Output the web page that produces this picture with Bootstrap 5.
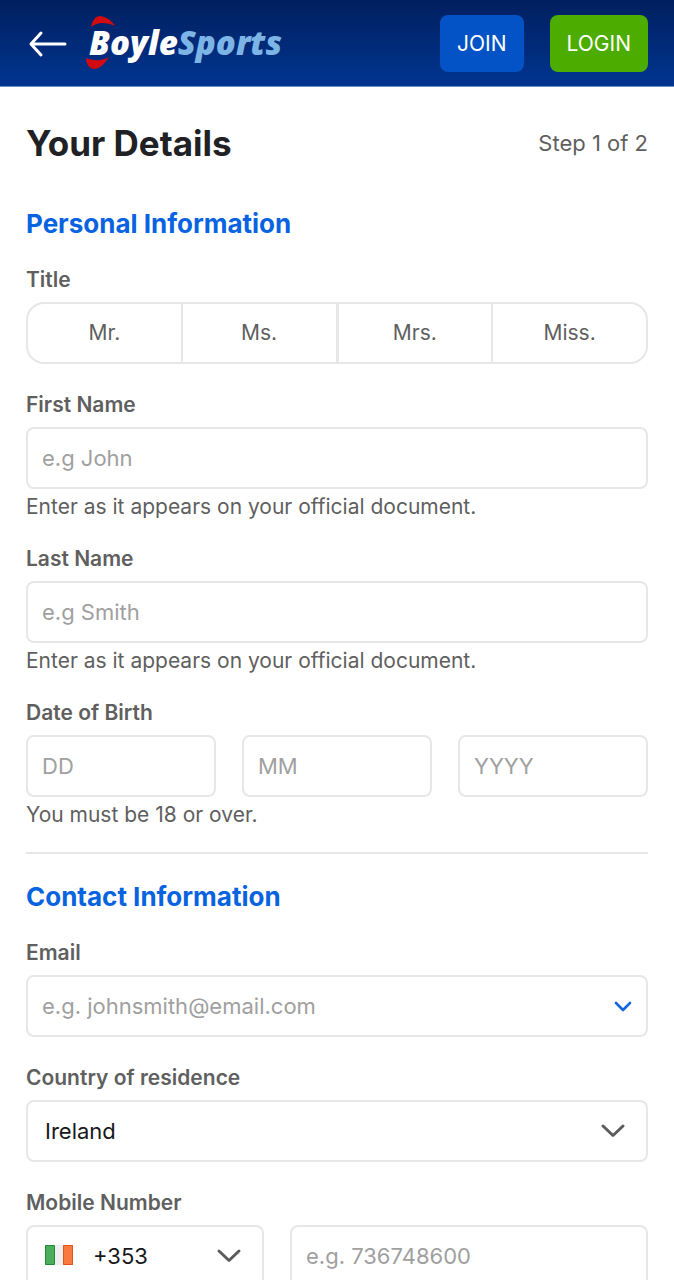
<!DOCTYPE html>
<html lang="en">
<head>
<meta charset="utf-8">
<meta name="viewport" content="width=device-width, initial-scale=1">
<title>BoyleSports – Your Details</title>
<link href="https://cdn.jsdelivr.net/npm/bootstrap@5.3.0/dist/css/bootstrap.min.css" rel="stylesheet">
<style>
  :root { --line: #e7e7e7; --ink: #5f5f5f; --brand: #0863e0; --gutter: 26px; }
  body { font-family: Inter, "Liberation Sans", sans-serif; color: var(--ink); background: #fff; font-size: 21px; line-height: 30px; }
  .site-header { background: linear-gradient(#011f5f, #013590); border-bottom: 1px solid #6d8fc4; padding: 15px var(--gutter) 14px; }
  .back-link { width: 44px; height: 32px; }
  .logo-link { margin-left: 12px; }
  .logo-link text { font-family: "Open Sans", "Noto Sans", sans-serif; font-size: 33px; font-weight: 800; font-style: italic; }
  .btn-top { height: 57px; padding: 0 17px; border: 0; border-radius: 8px; font-size: 21px; color: #fff; }
  .btn-join { background: #0353c6; }
  .btn-login { background: #4cad00; }
  .page { padding: 32px var(--gutter) 0; }
  .page-title { font-size: 35px; line-height: 48px; font-weight: 700; color: #202124; }
  .step { font-size: 22px; }
  .section-title { font-size: 26px; line-height: 32px; font-weight: 700; color: var(--brand); margin: 0 0 25px; }
  .title-row { margin-bottom: 41px; }
  .field { margin-bottom: 26px; }
  .field-label { display: block; float: none; width: auto; font-size: 21px; line-height: 30px; font-weight: 600; margin: 0 0 7px; }
  .form-control, .form-select { height: 62px; border: 2px solid var(--line); border-radius: 8px; padding: 0 14px; font-size: 22px; line-height: 34px; color: #17181a; background-color: #fff; }
  .form-control::placeholder { color: #a0a0a0; }
  .form-select { padding: 0 60px 0 17px; background-position: right 20px center; background-size: 26px 16px;
    background-image: url("data:image/svg+xml,%3Csvg xmlns='http://www.w3.org/2000/svg' viewBox='0 0 26 16'%3E%3Cpath d='M3 3l10 9.500L23 3' fill='none' stroke='%235c5c5c' stroke-width='3' stroke-linecap='round' stroke-linejoin='round'/%3E%3C/svg%3E"); }
  .code-select { padding-left: 65px; }
  .help { margin: 6px 0 0; line-height: 23px; }
  .titles .btn { flex: 1 1 0; height: 62px; border: 2px solid var(--line); font-size: 21px; color: var(--ink); line-height: 30px; padding: 14px 0; }
  .titles .btn + .btn-check + .btn { margin-left: -2px; }
  .titles .btn + .btn-check + .btn.mid { margin-left: -1px; }
  .titles .btn:first-of-type { border-radius: 18px 0 0 18px; }
  .titles .btn:last-of-type { border-radius: 0 18px 18px 0; }
  .divider { margin: 26px 0 27px; border-top: 2px solid var(--line); opacity: 1; }
  .split { gap: 26px; }
  .code { flex: 0 0 238px; }
  .flag { position: absolute; left: 19px; top: 20px; pointer-events: none; }
  .suggest { position: absolute; right: 14px; top: 20px; }
</style>
</head>
<body>
<header class="site-header d-flex align-items-center">
  <a class="back-link d-flex align-items-center" href="#" aria-label="Back">
    <svg width="44" height="32" viewBox="0 0 44 32" fill="none" stroke="#fff" stroke-width="3" stroke-linecap="round" stroke-linejoin="round"><path d="M15 5L5 16l10 11M6 16h33"/></svg>
  </a>
  <a class="logo-link d-flex" href="#" aria-label="BoyleSports">
    <svg width="216" height="57" viewBox="0 0 216 57">
      <path d="M9 12C11 5 13 1 18 1c7 1 12 5 15 10-9-4-17-4-24 1z" fill="#d20a11"/>
      <path d="M4 43c8 3 16 3 23-1-4 6-8 11-14 12-6 0-9-5-9-11z" fill="#d20a11"/>
      <text x="7" y="40" fill="#fff">Boyle<tspan fill="#7db4e6">Sports</tspan></text>
    </svg>
  </a>
  <div class="d-flex ms-auto split">
    <button type="button" class="btn btn-top btn-join">JOIN</button>
    <button type="button" class="btn btn-top btn-login">LOGIN</button>
  </div>
</header>

<main class="page">
  <div class="title-row d-flex justify-content-between align-items-center">
    <h1 class="page-title mb-0">Your Details</h1>
    <span class="step">Step 1 of 2</span>
  </div>

  <form>
    <h2 class="section-title">Personal Information</h2>

    <fieldset class="field">
      <legend class="field-label">Title</legend>
      <div class="btn-group titles d-flex">
        <input type="radio" class="btn-check" name="title" id="t-mr"><label class="btn" for="t-mr">Mr.</label>
        <input type="radio" class="btn-check" name="title" id="t-ms"><label class="btn" for="t-ms">Ms.</label>
        <input type="radio" class="btn-check" name="title" id="t-mrs"><label class="btn mid" for="t-mrs">Mrs.</label>
        <input type="radio" class="btn-check" name="title" id="t-miss"><label class="btn" for="t-miss">Miss.</label>
      </div>
    </fieldset>

    <div class="field">
      <label class="field-label" for="first">First Name</label>
      <input type="text" class="form-control" id="first" placeholder="e.g John">
      <p class="help">Enter as it appears on your official document.</p>
    </div>

    <div class="field">
      <label class="field-label" for="last">Last Name</label>
      <input type="text" class="form-control" id="last" placeholder="e.g Smith">
      <p class="help">Enter as it appears on your official document.</p>
    </div>

    <fieldset class="field">
      <legend class="field-label">Date of Birth</legend>
      <div class="d-flex split">
        <input type="text" class="form-control" aria-label="Day" placeholder="DD">
        <input type="text" class="form-control" aria-label="Month" placeholder="MM">
        <input type="text" class="form-control" aria-label="Year" placeholder="YYYY">
      </div>
      <p class="help">You must be 18 or over.</p>
    </fieldset>

    <hr class="divider">

    <h2 class="section-title">Contact Information</h2>

    <div class="field">
      <label class="field-label" for="email">Email</label>
      <div class="position-relative">
        <input type="email" class="form-control" id="email" placeholder="e.g. johnsmith@email.com">
        <button type="button" class="btn p-0 border-0 d-flex suggest" aria-label="Show suggestions">
          <svg width="22" height="22" viewBox="0 0 22 22" fill="none" stroke="#1267dc" stroke-width="2.6" stroke-linecap="round" stroke-linejoin="round"><path d="M4 8l7 7 7-7"/></svg>
        </button>
      </div>
    </div>

    <div class="field">
      <label class="field-label" for="country">Country of residence</label>
      <select class="form-select" id="country"><option>Ireland</option></select>
    </div>

    <div class="field">
      <label class="field-label" for="mobile">Mobile Number</label>
      <div class="d-flex split">
        <div class="position-relative code">
          <select class="form-select code-select" aria-label="Country code"><option>+353</option></select>
          <svg class="flag" width="28" height="20" viewBox="0 0 28 20"><path fill="#4cae5c" d="M0 0h9.500v20H0z"/><path fill="#efefef" d="M9.500 0h9v20h-9z"/><path fill="#f97a3c" d="M18.500 0H28v20h-9.500z"/><path d="M.5.500h9v19h-9z" fill="none" stroke="#1f8a38"/><path d="M18.500.500h9v19h-9z" fill="none" stroke="#e2521c"/></svg>
        </div>
        <input type="tel" class="form-control" id="mobile" placeholder="e.g. 736748600">
      </div>
    </div>
  </form>
</main>
<script src="https://cdn.jsdelivr.net/npm/bootstrap@5.3.0/dist/js/bootstrap.bundle.min.js"></script>
</body>
</html>
